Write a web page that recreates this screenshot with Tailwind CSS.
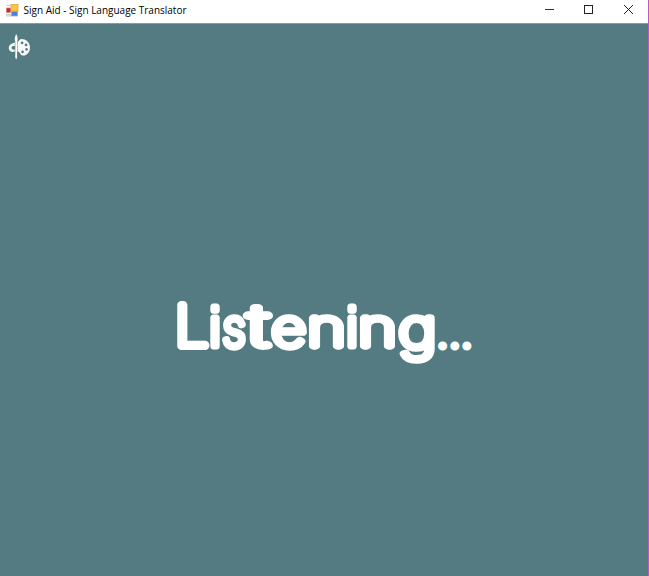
<!DOCTYPE html>
<html lang="en">
<head>
<meta charset="utf-8">
<title>Sign Aid - Sign Language Translator</title>
<script src="https://cdn.jsdelivr.net/npm/@tailwindcss/browser@4"></script>
</head>
<body class="w-[649px] h-[576px] overflow-hidden bg-white">
<div class="flex flex-col w-full h-full border-r border-[#b45cc4] bg-[#557b82]">
  <header class="flex items-center h-[23px] shrink-0 bg-white pl-[6px] pb-[3px]">
    <svg class="w-[13px] h-[13px] shrink-0" viewBox="0 0 13 13">
      <rect x="5" y="0.5" width="7" height="6.500" fill="#f8c844" stroke="#d9a63c" stroke-width=".8"/>
      <rect x="0.5" y="4" width="4" height="4.500" fill="#c8262c" stroke="#e08070" stroke-width=".7"/>
      <rect x="5.5" y="7.5" width="6" height="4.5" fill="#4b7fd6" stroke="#8fa9d8" stroke-width=".8"/>
      <path d="M.5 1.5h4M.5 10.5h4v1.5h-4z" stroke="#c6c6c6" fill="none"/>
    </svg>
    <svg class="w-[190px] h-[20px] ml-[4px] shrink-0" viewBox="0 0 190 20"><text x="0.500" y="13.5" textLength="163" lengthAdjust="spacingAndGlyphs" font-family="Open Sans, Noto Sans, sans-serif" font-size="10.500" fill="#000">Sign Aid - Sign Language Translator</text></svg>
    <div class="flex ml-auto items-center text-black">
      <svg class="w-[39px] h-[20px]" viewBox="0 0 39 20"><path d="M16 9.5h9" stroke="#333" fill="none"/></svg>
      <svg class="w-[39px] h-[20px]" viewBox="0 0 39 20"><rect x="16.5" y="5.5" width="8" height="8" stroke="#222" fill="none"/></svg>
      <svg class="w-[41px] h-[20px]" viewBox="0 0 41 20"><path d="M17 5l9 9M26 5l-9 9" stroke="#222" fill="none"/></svg>
    </div>
  </header>
  <main class="flex flex-col flex-1 border-t border-[#8b9b9f]">
    <svg class="w-[26px] h-[28px] ml-[6px] mt-[9px]" viewBox="0 0 26 28">
      <path fill="#fff" fill-opacity=".95" fill-rule="evenodd" d="M11.500 9C13 8 13.500 6.300 15 6C19 5.500 24 9 24 14.500C24 19.500 20.500 23 16.500 22.500C13.500 22 14.500 18.500 11.500 18.500zM16 8.500a1.400 1.400 0 1 0 .1 0zM20 10.500a1.400 1.400 0 1 0 .1 0zM20.500 15a1.400 1.400 0 1 0 .1 0zM16.500 17.500a1.400 1.400 0 1 0 .1 0z"/>
      <path fill="#fff" fill-opacity=".95" fill-rule="evenodd" d="M8.800 9.500C5 10.500 2.500 12.500 2.800 15.500C3.200 18.500 6 19.500 8.800 18.500V16.500C7 17 5.500 16 5.500 14.700C5.500 13.300 7 12.800 8.800 13z"/>
      <path fill="#fff" d="M10.200 1C11.900 4 12 6.500 11.100 8.500V24.500L10.200 26.500L9.300 24.500V8.500C8.400 6.500 8.500 4 10.200 1z"/>
    </svg>
    <svg class="w-[648px] h-[100px] mt-[219px]" viewBox="0 280 648 100">
      <text y="346" font-family="Inter, sans-serif" font-weight="100" font-size="50" fill="#fff" stroke="#fff" stroke-width="7.400" stroke-linejoin="round" stroke-linecap="round"><tspan x="174.800" font-size="56" stroke-width="8" textLength="34" lengthAdjust="spacingAndGlyphs">L</tspan><tspan x="208" font-family="DejaVu Sans" font-weight="200" font-size="52" stroke-width="7">i</tspan><tspan x="222.500" textLength="23" lengthAdjust="spacingAndGlyphs">s</tspan><tspan x="248" font-size="57" stroke-width="7.300" textLength="21" lengthAdjust="spacingAndGlyphs">t</tspan><tspan x="271.500" textLength="34.500" lengthAdjust="spacingAndGlyphs">e</tspan><tspan x="307.500" textLength="38" lengthAdjust="spacingAndGlyphs">n</tspan><tspan x="345" font-family="DejaVu Sans" font-weight="200" font-size="52" stroke-width="7">i</tspan><tspan x="358.500" textLength="38" lengthAdjust="spacingAndGlyphs">n</tspan><tspan x="398.500" y="348" font-size="54" textLength="38" lengthAdjust="spacingAndGlyphs">g</tspan><tspan x="438.300" y="347.800" font-weight="400" font-size="30" stroke-width="5">.</tspan><tspan x="450.500" font-weight="400" font-size="30" stroke-width="5">.</tspan><tspan x="462.600" font-weight="400" font-size="30" stroke-width="5">.</tspan></text>
    </svg>
  </main>
</div>
</body>
</html>
